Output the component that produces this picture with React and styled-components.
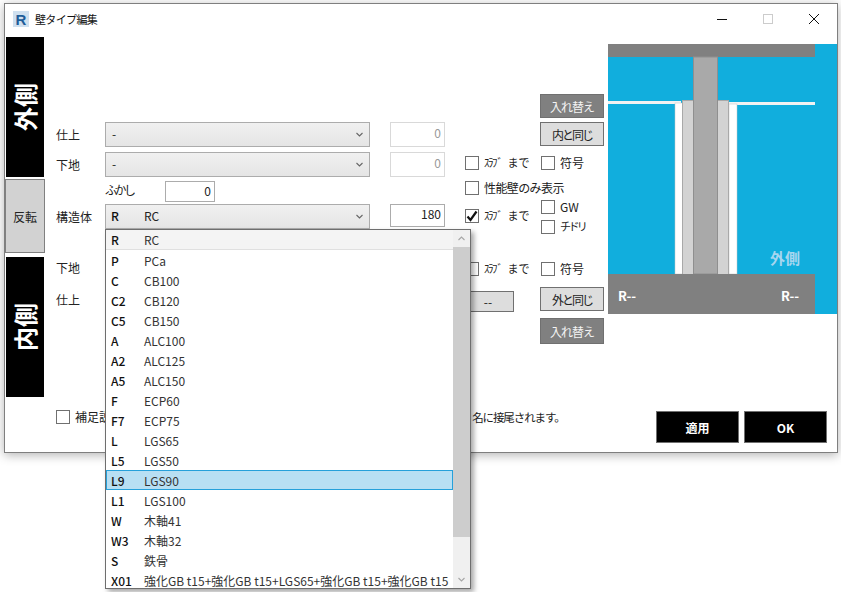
import styled, { createGlobalStyle } from "styled-components";

const items = [
  ["R", "RC"],
  ["P", "PCa"],
  ["C", "CB100"],
  ["C2", "CB120"],
  ["C5", "CB150"],
  ["A", "ALC100"],
  ["A2", "ALC125"],
  ["A5", "ALC150"],
  ["F", "ECP60"],
  ["F7", "ECP75"],
  ["L", "LGS65"],
  ["L5", "LGS50"],
  ["L9", "LGS90"],
  ["L1", "LGS100"],
  ["W", "木軸41"],
  ["W3", "木軸32"],
  ["S", "鉄骨"],
  ["X01", "強化GB t15+強化GB t15+LGS65+強化GB t15+強化GB t15"],
];

const Chevron = ({ up, color = "#666" }) => (
  <svg width="7" height="5" viewBox="0 0 7 5" fill="none">
    <polyline
      points={up ? "0.5,4 3.5,1 6.5,4" : "0.5,1 3.5,4 6.5,1"}
      stroke={color}
      strokeWidth="1.1"
    />
  </svg>
);

const Select = ({ code, name }) => (
  <SelectBox>
    {name ? (
      <>
        <Code>{code}</Code>
        <span>{name}</span>
      </>
    ) : (
      <Dash>{code}</Dash>
    )}
    <Arrow>
      <Chevron />
    </Arrow>
  </SelectBox>
);

const Check = ({ label, checked, size, tight }) => (
  <CheckRow>
    <CheckBox>
      {checked && (
        <svg width="12" height="12" viewBox="0 0 12 12" fill="none">
          <polyline points="1.5,6.5 4.5,10 10.5,1.5" stroke="#111" strokeWidth="2.2" />
        </svg>
      )}
    </CheckBox>
    <CheckLabel $size={size} $tight={tight}>
      {label}
    </CheckLabel>
  </CheckRow>
);

const SlabCheck = ({ checked }) => (
  <Check
    checked={checked}
    size={11}
    label={
      <>
        <SlabKana>ｽﾗﾌﾞ</SlabKana>まで
      </>
    }
  />
);

const Preview = () => (
  <PreviewSvg width="229" height="270" viewBox="0 0 229 270">
    <rect width="229" height="270" fill="#11aedd" />
    <rect width="207" height="13" fill="#808080" />
    <rect y="57" width="73" height="3" fill="#f2f2f2" />
    <rect x="121" y="58" width="86" height="3" fill="#f2f2f2" />
    <rect x="67" y="59" width="8" height="171" fill="#fff" stroke="#c4c4c4" strokeWidth="0.5" />
    <rect x="121" y="60" width="8" height="170" fill="#fff" stroke="#c4c4c4" strokeWidth="0.5" />
    <rect x="74.5" y="56.5" width="11" height="174" fill="#d3d3d3" stroke="#a9a9a9" />
    <rect x="109.5" y="56.5" width="11" height="174" fill="#d3d3d3" stroke="#a9a9a9" />
    <rect x="85.5" y="13" width="24" height="217" fill="#a9a9a9" stroke="#8f8f8f" />
    <rect y="230" width="207" height="40" fill="#808080" />
    <PreviewSide x="162" y="220">外側</PreviewSide>
    <PreviewCode x="10" y="257">R--</PreviewCode>
    <PreviewCode x="173" y="257">R--</PreviewCode>
  </PreviewSvg>
);

export default function App() {
  return (
    <Page>
      <GlobalStyle />
      <Window>
        <TitleBar>
          <svg width="16" height="16" viewBox="0 0 16 16">
            <rect width="16" height="16" fill="#cfe0ef" />
            <LogoLetter x="2.5" y="14">R</LogoLetter>
          </svg>
          <Title>壁タイプ編集</Title>
          <Controls>
            <ControlButton>
              <svg width="12" height="12" viewBox="0 0 12 12">
                <line x1="1" y1="6.5" x2="11" y2="6.5" stroke="#111" />
              </svg>
            </ControlButton>
            <ControlButton>
              <svg width="12" height="12" viewBox="0 0 12 12">
                <rect x="1.5" y="1.5" width="9" height="9" fill="none" stroke="#ccc" />
              </svg>
            </ControlButton>
            <ControlButton>
              <svg width="12" height="12" viewBox="0 0 12 12">
                <path d="M1 1 L11 11 M11 1 L1 11" stroke="#111" fill="none" />
              </svg>
            </ControlButton>
          </Controls>
        </TitleBar>

        <Body>
          <SideStrip>
            <SideBlock>
              <SideText>外側</SideText>
            </SideBlock>
            <FlipButton>反転</FlipButton>
            <SideBlock>
              <SideText>内側</SideText>
            </SideBlock>
          </SideStrip>

          <Form>
            <Row $h={24}>
              <SideCell>
                <GreyButton>入れ替え</GreyButton>
              </SideCell>
            </Row>
            <Row $top={4}>
              <Label>仕上</Label>
              <FieldCell>
                <Select code="-" />
              </FieldCell>
              <NumInput $disabled>0</NumInput>
              <SideCell>
                <LightButton>内と同じ</LightButton>
              </SideCell>
            </Row>
            <Row $top={5}>
              <Label>下地</Label>
              <FieldCell>
                <Select code="-" />
              </FieldCell>
              <NumInput $disabled>0</NumInput>
              <CheckCell>
                <SlabCheck />
              </CheckCell>
              <SideCell $pad={4} $left={1}>
                <Check label="符号" />
              </SideCell>
            </Row>
            <Row $top={4} $h={21}>
              <FurringCell>
                <FurringLabel>ふかし</FurringLabel>
                <FurringInput>0</FurringInput>
              </FurringCell>
              <WideCheckCell>
                <Check label="性能壁のみ表示" tight={0.6} />
              </WideCheckCell>
            </Row>
            <Row $top={2}>
              <Label>構造体</Label>
              <FieldCell>
                <Select code="R" name="RC" />
                <Popup>
                  <List>
                    {items.map(([code, name], i) => (
                      <Item key={code} $first={i === 0} $active={code === "L9"}>
                        <Code>{code}</Code>
                        <span>{name}</span>
                      </Item>
                    ))}
                  </List>
                  <Scrollbar>
                    <ScrollArrow>
                      <Chevron up color="#a6a6a6" />
                    </ScrollArrow>
                    <ScrollThumb />
                    <ScrollArrow $end>
                      <Chevron color="#a6a6a6" />
                    </ScrollArrow>
                  </Scrollbar>
                </Popup>
              </FieldCell>
              <NumInput $h={23}>180</NumInput>
              <CheckCell $pad={5}>
                <SlabCheck checked />
              </CheckCell>
              <SideStack>
                <Check label="GW" />
                <Check label="チドリ" size={11} tight={2.6} />
              </SideStack>
            </Row>
            <Row $top={26}>
              <Label>下地</Label>
              <CheckCell $pad={7}>
                <SlabCheck />
              </CheckCell>
              <SideCell $pad={7} $left={1}>
                <Check label="符号" />
              </SideCell>
            </Row>
            <Row $top={7}>
              <Label>仕上</Label>
              <CheckCell $pad={4}>
                <DashButton>--</DashButton>
              </CheckCell>
              <SideCell>
                <LightButton>外と同じ</LightButton>
              </SideCell>
            </Row>
            <Row $top={6} $h={26}>
              <SideCell>
                <GreyButton>入れ替え</GreyButton>
              </SideCell>
            </Row>
          </Form>

          <Preview />
        </Body>

        <Footer>
          <Check
            label={
              <>
                補足説明を入力すると、入力した内容が表示用の略称として壁種類のﾀｲﾌﾟ
                <FooterTail>名に接尾されます。</FooterTail>
              </>
            }
          />
          <FooterButtons>
            <BlackButton>適用</BlackButton>
            <BlackButton>OK</BlackButton>
          </FooterButtons>
        </Footer>
      </Window>
    </Page>
  );
}

const GlobalStyle = createGlobalStyle`
  html, body {
    margin: 0;
    background: #fff;
    font-family: "Noto Sans CJK JP", "Noto Sans", sans-serif;
    font-size: 12px;
    color: #222;
  }
  * {
    box-sizing: border-box;
  }
`;

const Page = styled.div`
  width: 841px;
  height: 592px;
  padding: 3px 0 0 4px;
  overflow: hidden;
`;

const Window = styled.div`
  width: 834px;
  height: 450px;
  background: #fff;
  border: 1px solid #7f7f7f;
  box-shadow: 0 2px 10px rgba(0, 0, 0, 0.3);
  display: flex;
  flex-direction: column;
`;

const TitleBar = styled.div`
  height: 33px;
  flex: none;
  display: flex;
  align-items: center;
  padding: 0 0 4px 8px;
`;

const LogoLetter = styled.text`
  font-family: "Liberation Sans", sans-serif;
  font-weight: 700;
  font-size: 15px;
  fill: #1f5d99;
`;

const Title = styled.div`
  margin-left: 6px;
  font-size: 11px;
  letter-spacing: -0.65px;
  color: #111;
`;

const Controls = styled.div`
  margin-left: auto;
  display: flex;
`;

const ControlButton = styled.div`
  width: 46px;
  height: 29px;
  display: flex;
  align-items: center;
  justify-content: center;
`;

const Body = styled.div`
  height: 360px;
  flex: none;
  display: flex;
`;

const SideStrip = styled.div`
  width: 40px;
  flex: none;
  display: flex;
  flex-direction: column;
  align-items: center;
`;

const SideBlock = styled.div`
  width: 38px;
  height: 140px;
  background: #000;
  display: flex;
  align-items: center;
  justify-content: center;
`;

const SideText = styled.div`
  transform: rotate(-90deg);
  white-space: nowrap;
  color: #fff;
  font-size: 24px;
  font-weight: 700;
  line-height: 1;
`;

const FlipButton = styled.div`
  width: 40px;
  height: 74px;
  margin: 2px 0 4px;
  background: #d2d2d2;
  border: 1px solid #808080;
  display: flex;
  align-items: center;
  justify-content: center;
  font-size: 12px;
`;

const Form = styled.div`
  width: 563px;
  flex: none;
  padding: 57px 4px 0 11px;
`;

const Row = styled.div`
  display: grid;
  grid-template-columns: 49px 265px 20px 55px 20px 75px 64px;
  grid-template-rows: ${(p) => p.$h || 25}px;
  grid-template-areas: "label field . num . chk side";
  height: ${(p) => p.$h || 25}px;
  margin-top: ${(p) => p.$top || 0}px;
`;

const Label = styled.div`
  grid-area: label;
  align-self: center;
  font-size: 12px;
`;

const FieldCell = styled.div`
  grid-area: field;
  position: relative;
`;

const SelectBox = styled.div`
  height: 25px;
  display: flex;
  align-items: center;
  padding: 0 5px 2px;
  background: linear-gradient(#f0f0f0, #e5e5e5);
  border: 1px solid #acacac;
`;

const Code = styled.span`
  width: 33px;
  flex: none;
  font-weight: 500;
  color: #111;
`;

const Dash = styled.span`
  padding-left: 1px;
`;

const Arrow = styled.span`
  margin-left: auto;
  margin-right: 1px;
  margin-top: 2px;
  display: flex;
`;

const NumInput = styled.div`
  grid-area: num;
  height: ${(p) => p.$h || 25}px;
  padding: 0 3px 4px;
  display: flex;
  align-items: center;
  justify-content: flex-end;
  background: #fff;
  border: 1px solid ${(p) => (p.$disabled ? "#d9d9d9" : "#acacac")};
  color: ${(p) => (p.$disabled ? "#999" : "#222")};
`;

const FurringCell = styled.div`
  grid-area: field;
  display: flex;
  align-items: center;
`;

const FurringLabel = styled.div`
  width: 60px;
  margin-top: -4px;
  letter-spacing: -2.5px;
`;

const FurringInput = styled.div`
  width: 50px;
  height: 21px;
  padding: 0 3px 2px;
  display: flex;
  align-items: center;
  justify-content: flex-end;
  border: 1px solid #acacac;
`;

const CheckCell = styled.div`
  grid-area: chk;
  padding-top: ${(p) => p.$pad ?? 4}px;
`;

const WideCheckCell = styled.div`
  grid-column: 6 / 8;
  grid-row: 1;
`;

const SideCell = styled.div`
  grid-area: side;
  padding-top: ${(p) => p.$pad || 0}px;
  padding-left: ${(p) => p.$left || 0}px;
`;

const SideStack = styled.div`
  grid-area: side;
  margin-top: -4px;
  padding-left: 1px;
  display: flex;
  flex-direction: column;
  gap: 6px;
`;

const CheckRow = styled.div`
  display: flex;
  align-items: center;
  gap: 5px;
  height: 14px;
  white-space: nowrap;
`;

const CheckBox = styled.div`
  width: 14px;
  height: 14px;
  flex: none;
  background: #fff;
  border: 1px solid #707070;
  display: flex;
  align-items: center;
  justify-content: center;
`;

const CheckLabel = styled.span`
  font-size: ${(p) => p.$size || 12}px;
  letter-spacing: ${(p) => (p.$tight ? -p.$tight : 0)}px;
  margin-top: -2px;
  color: #222;
`;

const SlabKana = styled.span`
  letter-spacing: -1.5px;
  margin-right: 6px;
`;

const FooterTail = styled.span`
  margin-left: 2px;
  font-size: 11.5px;
  letter-spacing: -1.1px;
`;

const GreyButton = styled.div`
  height: 100%;
  background: #808080;
  border: 1px solid #707070;
  color: #f4f4f4;
  letter-spacing: -1px;
  display: flex;
  align-items: center;
  justify-content: center;
`;

const LightButton = styled.div`
  height: 24px;
  background: #dddddd;
  border: 1px solid #707070;
  letter-spacing: -2px;
  display: flex;
  align-items: center;
  justify-content: center;
`;

const DashButton = styled.div`
  width: 52px;
  height: 21px;
  margin-left: -3px;
  background: #dddddd;
  border: 1px solid #707070;
  display: flex;
  align-items: center;
  justify-content: center;
`;

const Popup = styled.div`
  position: absolute;
  top: 100%;
  left: 0;
  z-index: 5;
  width: 366px;
  height: 360px;
  display: flex;
  background: #fff;
  border: 1px solid #6e6e6e;
  box-shadow: 3px 3px 5px rgba(0, 0, 0, 0.35);
`;

const List = styled.div`
  flex: 1;
  min-width: 0;
  overflow: hidden;
`;

const Item = styled.div`
  height: 20px;
  display: flex;
  align-items: center;
  padding-left: 5px;
  white-space: nowrap;
  color: #333;
  background: ${(p) => (p.$active ? "#b8dff3" : p.$first ? "#f4f4f4" : "#fff")};
  border: 1px solid ${(p) => (p.$active ? "#26a0da" : "transparent")};
  border-width: ${(p) => (p.$active ? "1px" : "0")};
  border-bottom: ${(p) => p.$first && "1px solid #e0e0e0"};
  padding-left: ${(p) => (p.$active ? 4 : 5)}px;
`;

const Scrollbar = styled.div`
  width: 17px;
  flex: none;
  display: flex;
  flex-direction: column;
  background: #f0f0f0;
`;

const ScrollArrow = styled.div`
  height: 17px;
  flex: none;
  margin-top: ${(p) => (p.$end ? "auto" : 0)};
  display: flex;
  align-items: center;
  justify-content: center;
`;

const ScrollThumb = styled.div`
  height: 290px;
  background: #cdcdcd;
`;

const PreviewSvg = styled.svg`
  flex: none;
  margin-top: 7px;
`;

const PreviewSide = styled.text`
  font-size: 15px;
  font-weight: 700;
  fill: #a6d6ef;
`;

const PreviewCode = styled.text`
  font-size: 13px;
  font-weight: 700;
  fill: #fff;
`;

const Footer = styled.div`
  flex: 1;
  display: flex;
  align-items: flex-start;
  justify-content: space-between;
  padding: 13px 10px 0 51px;
`;

const FooterButtons = styled.div`
  display: flex;
  gap: 5px;
  margin-top: 1px;
`;

const BlackButton = styled.div`
  width: 83px;
  height: 32px;
  background: #000;
  border: 1px solid #707070;
  color: #fff;
  font-weight: 700;
  display: flex;
  align-items: center;
  justify-content: center;
`;
